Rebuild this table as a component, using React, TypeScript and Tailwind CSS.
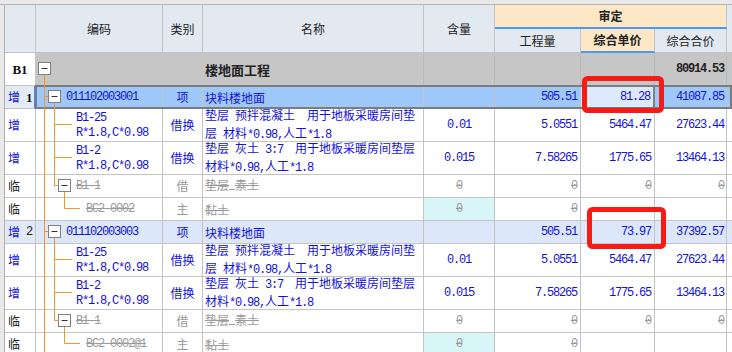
import React from 'react';

type Row = {
  h: string;
  head: React.ReactNode;
  headBg?: string;
  bg?: string;
  code: string[];
  codePad: string;
  type: string;
  name: string[];
  qty?: string;
  amt?: string;
  price?: string;
  total?: string;
  temp?: boolean;
  cyan?: boolean;
  selected?: boolean;
};

const MONO = "font-['Liberation_Mono',monospace] text-[12px] tracking-[-1.2px]";

function Mixed({ text }: { text: string }) {
  const parts = text.match(/[\x00-\x7f]+|[^\x00-\x7f]+/g) || [];
  return (
    <>
      {parts.map((p, i) =>
        /[\x00-\x7f]/.test(p[0]) ? (
          <span key={i} className={MONO}>{p}</span>
        ) : (
          <span key={i}>{p}</span>
        )
      )}
    </>
  );
}

function Cell({ w, className = '', children }: { w: string; className?: string; children?: React.ReactNode }) {
  return (
    <div className={`${w} shrink-0 h-full border-r border-b border-[#c4c4c4] flex items-center ${className}`}>
      {children}
    </div>
  );
}

function Zero() {
  return <span className={`${MONO} text-[#9a9a9a] line-through`}>0</span>;
}

function Num({ v }: { v?: string }) {
  if (v === undefined) return null;
  if (v === '0') return <Zero />;
  return <span className={`${MONO} text-[#1212dc]`}>{v}</span>;
}

const subRows = (bc: string): Row[] => [
  {
    h: 'h-[33px]', head: <span className="text-[#1212dc]">增</span>, code: ['B1-25', 'R*1.8,C*0.98'], codePad: 'pl-[40px]',
    type: '借换', name: ['垫层 预拌混凝土  用于地板采暖房间垫', '层 材料*0.98,人工*1.8'],
    qty: '0.01', amt: '5.0551', price: '5464.47', total: '27623.44',
  },
  {
    h: 'h-[33px]', head: <span className="text-[#1212dc]">增</span>, code: ['B1-2', 'R*1.8,C*0.98'], codePad: 'pl-[40px]',
    type: '借换', name: ['垫层 灰土 3:7  用于地板采暖房间垫层', '材料*0.98,人工*1.8'],
    qty: '0.015', amt: '7.58265', price: '1775.65', total: '13464.13',
  },
  {
    h: 'h-[23px]', head: <span className="text-[#222]">临</span>, code: ['B1-1'], codePad: 'pl-[40px]',
    type: '借', name: ['垫层 素土'], qty: '0', amt: '0', price: '0', total: '0', temp: true,
  },
  {
    h: 'h-[23px]', head: <span className="text-[#222]">临</span>, code: [bc], codePad: 'pl-[50px]',
    type: '主', name: ['黏土'], qty: '0', amt: '0', temp: true, cyan: true,
  },
];

const rows: Row[] = [
  {
    h: 'h-[23px]', selected: true, headBg: 'bg-[#e3ebf6]', bg: 'bg-[#9fc8fa]',
    head: (
      <span className="flex items-center gap-[6px]">
        <span className="text-[#1212dc]">增</span>
        <span className="font-['Liberation_Serif',serif] font-bold text-[13px] text-[#111]">1</span>
      </span>
    ),
    code: ['011102003001'], codePad: 'pl-[30px]', type: '项', name: ['块料楼地面'],
    amt: '505.51', price: '81.28', total: '41087.85',
  },
  ...subRows('BC2-0002'),
  {
    h: 'h-[23px]', headBg: 'bg-[#dfe9f8]', bg: 'bg-[#dce8fa]',
    head: (
      <span className="flex items-center gap-[6px]">
        <span className="text-[#1212dc]">增</span>
        <span className={`${MONO} text-[#222]`}>2</span>
      </span>
    ),
    code: ['011102003003'], codePad: 'pl-[30px]', type: '项', name: ['块料楼地面'],
    amt: '505.51', price: '73.97', total: '37392.57',
  },
  ...subRows('BC2-0002@1'),
];

function HeadCell({ w, children, className = '' }: { w: string; children?: React.ReactNode; className?: string }) {
  return (
    <div className={`${w} shrink-0 h-full bg-[#e2e9f1] border-r border-b border-[#c4c4c4] flex items-center justify-center text-[#222] ${className}`}>
      {children}
    </div>
  );
}

function TreeBox({ x, y }: { x: number; y: number }) {
  return (
    <g>
      <rect x={x + 0.5} y={y + 0.5} width={12} height={12} fill="#fff" stroke="#808080" />
      <line x1={x + 3.5} y1={y + 6.5} x2={x + 9.5} y2={y + 6.5} stroke="#333" />
    </g>
  );
}

function Overlay() {
  const o = '#f5952c';
  const group = (d: number) => (
    <g key={d}>
      <line x1={44.5} y1={96.5 + d} x2={48.5} y2={96.5 + d} stroke={o} />
      <line x1={54.5} y1={103 + d} x2={54.5} y2={185.5 + d} stroke={o} />
      <line x1={54.5} y1={124.5 + d} x2={72} y2={124.5 + d} stroke={o} />
      <line x1={54.5} y1={157.5 + d} x2={72} y2={157.5 + d} stroke={o} />
      <line x1={54.5} y1={185.5 + d} x2={58.5} y2={185.5 + d} stroke={o} />
      <line x1={64.5} y1={192 + d} x2={64.5} y2={208.5 + d} stroke={o} />
      <line x1={64.5} y1={208.5 + d} x2={80} y2={208.5 + d} stroke={o} />
      <TreeBox x={48} y={90 + d} />
      <TreeBox x={58} y={179 + d} />
    </g>
  );
  return (
    <svg className="absolute top-0 left-0 pointer-events-none" width={732} height={352}>
      <line x1={44.5} y1={75} x2={44.5} y2={352} stroke={o} />
      <TreeBox x={38} y={62} />
      {group(0)}
      {group(135)}
      <rect x={584.5} y={78.5} width={77} height={32} rx={3} fill="none" stroke="#fa1a14" strokeWidth={5} />
      <rect x={589.5} y={209.5} width={74} height={37} rx={3} fill="none" stroke="#fa1a14" strokeWidth={5} />
    </svg>
  );
}

export default function App() {
  return (
    <div className="relative w-[732px] h-[352px] overflow-hidden bg-white text-[12px] leading-none font-['Noto_Sans_CJK_SC','Noto_Sans',sans-serif]">
      <div className="h-[5px] bg-[#e9e9e9] border-b border-[#b4b4b4]" />

      {/* header */}
      <div className="flex h-[48px]">
        <div className="w-[5px] shrink-0 h-full bg-[#e9e9e9] border-r border-[#b0b0b0]" />
        <HeadCell w="w-[31px]" />
        <HeadCell w="w-[127px]">编码</HeadCell>
        <HeadCell w="w-[40px]">类别</HeadCell>
        <HeadCell w="w-[221px]">名称</HeadCell>
        <HeadCell w="w-[71px]">含量</HeadCell>
        <div className="w-[232px] shrink-0 h-full flex flex-col">
          <div className="h-[24px] bg-[#fde7c7] border-r border-[#c4c4c4] border-b-2 border-b-[#4a9be8] flex items-center justify-center font-bold text-[#222]">
            审定
          </div>
          <div className="flex h-[24px]">
            <HeadCell w="w-[86px]">工程量</HeadCell>
            <div className="w-[74px] shrink-0 h-full bg-[#fde7c7] border-r border-[#c4c4c4] border-b-2 border-b-[#4a9be8] flex items-center justify-center font-bold text-[#222]">
              综合单价
            </div>
            <HeadCell w="w-[72px]">综合合价</HeadCell>
          </div>
        </div>
        <div className="flex-1 h-full bg-[#e2e9f1] border-b border-[#c4c4c4]" />
      </div>

      {/* B1 row */}
      <div className="flex h-[33px]">
        <div className="w-[5px] shrink-0 h-full bg-[#e9e9e9] border-r border-[#b0b0b0]" />
        <Cell w="w-[31px]" className="justify-center bg-white">
          <span className="font-['Liberation_Serif',serif] font-bold text-[13px] text-[#111]">B1</span>
        </Cell>
        <div className="flex-1 h-full flex bg-[#c6c6c6] border-b border-[#8a8a8a]">
          <div className="w-[127px] shrink-0" />
          <div className="w-[40px] shrink-0 border-r border-[#c6c6c6]" />
          <div className="w-[221px] shrink-0 h-full border-r border-[#bababa] flex items-center pl-[2px] font-bold text-[13px] text-[#222]">
            楼地面工程
          </div>
          <div className="w-[71px] shrink-0 h-full border-r border-[#bababa]" />
          <div className="w-[86px] shrink-0 h-full border-r border-[#bababa]" />
          <div className="w-[74px] shrink-0 h-full border-r border-[#bababa]" />
          <div className="w-[72px] shrink-0 h-full border-r border-[#bababa] flex items-center justify-end pr-[2px]">
            <span className={`${MONO} font-bold text-[#222]`}>80914.53</span>
          </div>
        </div>
      </div>

      {rows.map((r, i) => {
        const txt = r.temp ? 'text-[#9a9a9a]' : 'text-[#1212dc]';
        const bg = r.bg ?? 'bg-white';
        return (
          <div key={i} className={`relative flex ${r.h}`}>
            <div className="w-[5px] shrink-0 h-full bg-[#e9e9e9] border-r border-[#b0b0b0]" />
            <Cell
              w="w-[31px]"
              className={`pl-[3px] ${r.headBg ?? 'bg-white'} ${r.selected ? 'border-r-2 border-r-[#3c8cf0]' : ''}`}
            >
              {r.head}
            </Cell>
            <Cell w="w-[127px]" className={`${bg} ${r.codePad}`}>
              <div className={`flex flex-col gap-[3px] ${MONO} ${txt} ${r.temp ? 'line-through' : ''}`}>
                {r.code.map((c, j) => (
                  <span key={j}>{c}</span>
                ))}
              </div>
            </Cell>
            <Cell w="w-[40px]" className={`${bg} justify-center ${txt}`}>
              {r.type}
            </Cell>
            <Cell w="w-[221px]" className={`${bg} pl-[2px] ${txt}`}>
              <div className={`flex flex-col leading-[15px] whitespace-pre ${r.temp ? 'line-through' : ''}`}>
                {r.name.map((n, j) => (
                  <span key={j} className="block">
                    <Mixed text={n} />
                  </span>
                ))}
              </div>
            </Cell>
            <Cell w="w-[71px]" className={`${r.cyan ? 'bg-[#d8f6f7]' : bg} justify-center`}>
              <Num v={r.qty} />
            </Cell>
            <Cell w="w-[86px]" className={`${bg} justify-end pr-[3px]`}>
              <Num v={r.amt} />
            </Cell>
            <Cell
              w="w-[74px]"
              className={`${r.selected ? 'bg-[#dde9fc] border-r-2 border-r-[#808080]' : bg} justify-end pr-[3px]`}
            >
              <Num v={r.price} />
            </Cell>
            <Cell w="w-[72px]" className={`${bg} justify-end pr-[2px]`}>
              <Num v={r.total} />
            </Cell>
            <div className={`flex-1 h-full border-b border-[#c4c4c4] ${bg}`} />
            {r.selected && (
              <div className="absolute left-[35px] right-0 top-[-1px] bottom-0 border-2 border-[#7c7c7c] pointer-events-none" />
            )}
          </div>
        );
      })}

      <Overlay />
    </div>
  );
}
